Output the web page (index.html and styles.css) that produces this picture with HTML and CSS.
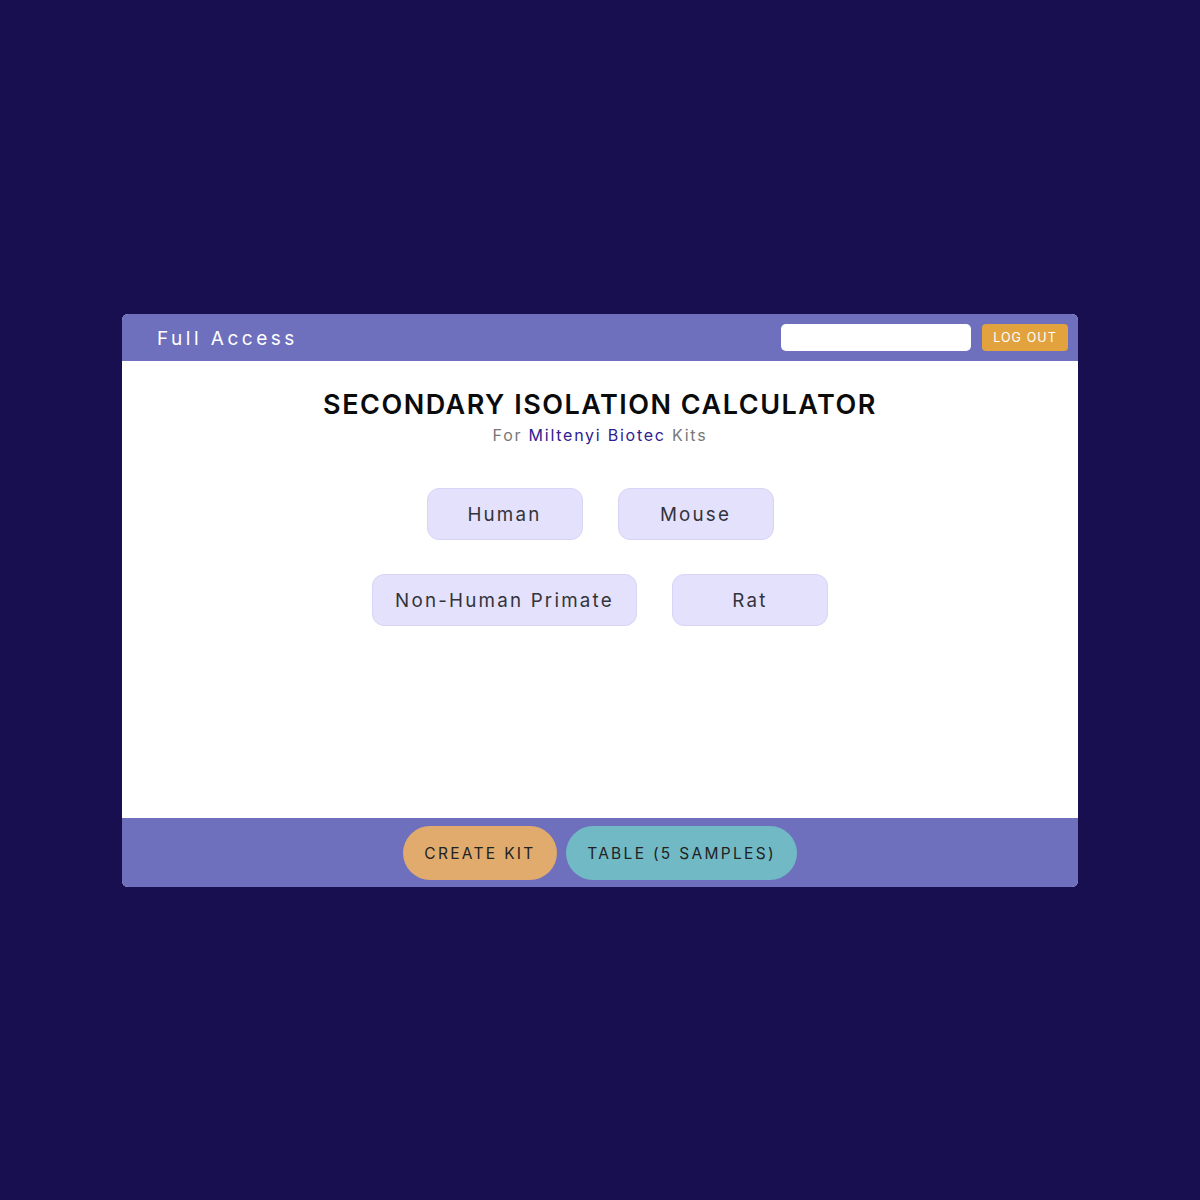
FILE: index.html
```html
<!DOCTYPE html>
<html lang="en">
<head>
<meta charset="utf-8">
<title>Secondary Isolation Calculator</title>
<link rel="stylesheet" href="styles.css">
</head>
<body>
  <div class="card">
    <header class="topbar">
      <span class="access">Full Access</span>
      <div class="top-actions">
        <input class="search" type="text" aria-label="search">
        <button class="logout">LOG OUT</button>
      </div>
    </header>
    <main class="content">
      <h1 class="title">SECONDARY ISOLATION CALCULATOR</h1>
      <p class="subtitle">For <span class="brand">Miltenyi Biotec</span> Kits</p>
      <div class="species">
        <div class="row">
          <button class="choice">Human</button>
          <button class="choice">Mouse</button>
        </div>
        <div class="row">
          <button class="choice">Non-Human Primate</button>
          <button class="choice">Rat</button>
        </div>
      </div>
    </main>
    <footer class="bottombar">
      <button class="pill create">CREATE KIT</button>
      <button class="pill table">TABLE (5 SAMPLES)</button>
    </footer>
  </div>
</body>
</html>
```
FILE: styles.css
```css
* { box-sizing: border-box; }
html, body { margin: 0; padding: 0; }
body {
  background: #170f4f;
  min-height: 1200px;
  display: flex;
  align-items: center;
  justify-content: center;
  font-family: Inter, "Noto Sans", sans-serif;
}
.card {
  width: 956px;
  border-radius: 6px;
  overflow: hidden;
  background: #ffffff;
}
.topbar {
  height: 47px;
  background: #6e70bd;
  display: flex;
  align-items: center;
  justify-content: space-between;
  padding: 0 10px 0 35px;
}
.access {
  color: #ffffff;
  font-size: 19px;
  line-height: 24px;
  padding-top: 4px;
  letter-spacing: 3.5px;
  font-weight: 400;
}
.top-actions {
  display: flex;
  align-items: center;
  gap: 11px;
}
.search {
  width: 190px;
  height: 27px;
  border: none;
  border-radius: 5px;
  background: #ffffff;
  outline: none;
}
.logout {
  width: 86px;
  height: 27px;
  border: none;
  border-radius: 4px;
  background: #e2a33e;
  color: #ffffff;
  font-family: inherit;
  font-size: 12.5px;
  letter-spacing: 1.1px;
  padding: 1px 0 0;
}
.content {
  height: 457px;
  padding-top: 28px;
  display: flex;
  flex-direction: column;
  align-items: center;
}
.title {
  margin: 0;
  font-size: 27px;
  line-height: 32px;
  font-weight: 600;
  letter-spacing: 1.5px;
  color: #0b0b0b;
}
.subtitle {
  margin: 4px 0 0;
  font-size: 16px;
  line-height: 20px;
  letter-spacing: 1.75px;
  color: #777777;
}
.brand { color: #2e2191; }
.species {
  margin-top: 43px;
  display: flex;
  flex-direction: column;
  gap: 34px;
}
.row {
  display: flex;
  justify-content: center;
  gap: 35px;
}
.choice {
  min-width: 156px;
  height: 52px;
  padding: 2px 22px 0;
  background: #e4e1fc;
  border: 1px solid #d8d4f6;
  border-radius: 12px;
  font-family: inherit;
  font-size: 18.8px;
  letter-spacing: 2.2px;
  color: #33333b;
}
.bottombar {
  height: 69px;
  background: #6e70bd;
  display: flex;
  justify-content: center;
  align-items: flex-start;
  gap: 9px;
  padding-top: 8px;
}
.pill {
  height: 54px;
  border: none;
  border-radius: 27px;
  font-family: inherit;
  font-size: 15.5px;
  letter-spacing: 2.3px;
  color: #222222;
  padding: 2px 0 0;
}
.create { width: 154px; background: #e0ab6c; }
.table { width: 231px; background: #70b9c5; }
```
